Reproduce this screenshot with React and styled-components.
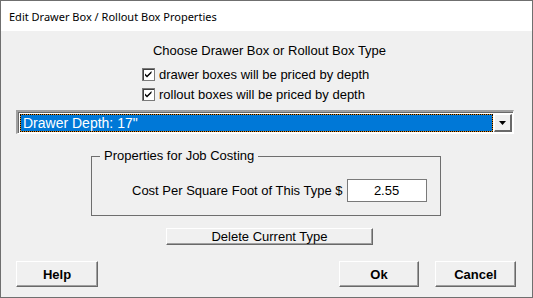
import React from "react";
import styled, { createGlobalStyle } from "styled-components";

const Global = createGlobalStyle`
  html, body { margin: 0; padding: 0; background: #ffffff; }
  * { box-sizing: border-box; }
`;

const Window = styled.div`
  width: 533px;
  height: 298px;
  border: 1px solid #6f6f6f;
  display: flex;
  flex-direction: column;
  font-family: "Liberation Sans", Arial, sans-serif;
  font-size: 13px;
  color: #000;
`;

const TitleBar = styled.div`
  height: 30px;
  flex: none;
  background: #ffffff;
  display: flex;
  align-items: center;
  padding-left: 8px;
  font-family: "Noto Sans", "Open Sans", sans-serif;
  font-size: 11px;
  color: #000;
`;

const Body = styled.div`
  flex: 1;
  background: #f0f0f0;
  display: flex;
  flex-direction: column;
  padding: 12px 16px 10px 14px;
`;

const Heading = styled.div`
  text-align: center;
  line-height: 16px;
  height: 16px;
  padding-left: 8px;
  white-space: nowrap;
`;

const CheckList = styled.div`
  margin-top: 5px;
  padding-left: 127px;
  display: flex;
  flex-direction: column;
`;

const CheckRow = styled.label`
  display: flex;
  align-items: center;
  height: 20px;
  gap: 4px;
  white-space: nowrap;
`;

const Box = styled.span`
  width: 13px;
  height: 13px;
  display: inline-flex;
  background: #fff;
  border: 1px solid #7a7a7a;
  box-shadow: inset 1px 1px 0 #404040;
`;

const Combo = styled.div`
  margin-top: 6px;
  height: 24px;
  width: 498px;
  margin-left: 1px;
  display: flex;
  border-style: solid;
  border-width: 2px 1px 1px 2px;
  border-color: #a0a0a0 #ffffff #ffffff #a0a0a0;
  box-shadow: inset 1px 1px 0 #696969;
  background: #fff;
  padding: 2px 1px 1px 2px;
`;

const FocusBg = styled.div`
  flex: 1;
  background: #d8861c;
  display: flex;
`;

const Selected = styled.div`
  flex: 1;
  border: 1px dotted #000;
  background: #0078d7;
  background-clip: padding-box;
  color: #fff;
  display: flex;
  align-items: center;
  padding-left: 2px;
  font-size: 14px;
`;

const DropBtn = styled.div`
  width: 18px;
  margin-left: 1px;
  display: flex;
  align-items: center;
  justify-content: center;
  background: #f0f0f0;
  border-style: solid;
  border-width: 1px 2px 2px 1px;
  border-color: #ffffff #696969 #696969 #ffffff;
`;

const Group = styled.div`
  position: relative;
  margin-top: 22px;
  margin-left: 76px;
  width: 350px;
  height: 60px;
  border: 1px solid #6e6e6e;
  display: flex;
  align-items: flex-start;
  padding: 22px 0 0 40px;
  gap: 4px;
`;

const Legend = styled.span`
  position: absolute;
  top: -9px;
  left: 8px;
  padding: 0 4px;
  background: #f0f0f0;
  line-height: 16px;
  white-space: nowrap;
`;

const FieldLabel = styled.span`
  line-height: 23px;
  white-space: nowrap;
`;

const Input = styled.div`
  flex: none;
  width: 80px;
  height: 23px;
  border: 1px solid #7a7a7a;
  background: #fff;
  display: flex;
  align-items: center;
  justify-content: center;
`;

const Button = styled.button`
  font-family: "Liberation Sans", Arial, sans-serif;
  font-size: 13px;
  font-weight: ${(p) => (p.$bold ? 700 : 400)};
  color: #000;
  background: #f0f0f0;
  width: ${(p) => p.$w}px;
  height: ${(p) => p.$h}px;
  padding: 0;
  border-style: solid;
  border-width: 1px;
  border-color: #ffffff #696969 #696969 #ffffff;
  box-shadow: inset -1px -1px 0 #a0a0a0;
  display: flex;
  align-items: center;
  justify-content: center;
  white-space: nowrap;
`;

const DeleteRow = styled.div`
  margin-top: 12px;
  display: flex;
  padding-left: 151px;
`;

const Footer = styled.div`
  margin-top: auto;
  display: flex;
  align-items: center;
  padding-left: 1px;
`;

const Spacer = styled.div`
  flex: 1;
`;

const Right = styled.div`
  display: flex;
  gap: 16px;
`;

const Check = () => (
  <Box>
    <svg width="11" height="11" viewBox="0 0 11 11">
      <path d="M2 4.5 L4 6.5 L8.5 2 L8.5 4 L4 8.5 L2 6.5 Z" fill="#000" />
    </svg>
  </Box>
);

export default function App() {
  return (
    <>
      <Global />
      <Window>
        <TitleBar>Edit Drawer Box / Rollout Box Properties</TitleBar>
        <Body>
          <Heading>Choose Drawer Box or Rollout Box Type</Heading>
          <CheckList>
            <CheckRow>
              <Check />
              drawer boxes will be priced by depth
            </CheckRow>
            <CheckRow>
              <Check />
              rollout boxes will be priced by depth
            </CheckRow>
          </CheckList>
          <Combo>
            <FocusBg>
              <Selected>Drawer Depth: 17"</Selected>
            </FocusBg>
            <DropBtn>
              <svg width="7" height="4" viewBox="0 0 7 4">
                <path d="M0 0 H7 L3.5 4 Z" fill="#000" />
              </svg>
            </DropBtn>
          </Combo>
          <Group>
            <Legend>Properties for Job Costing</Legend>
            <FieldLabel>Cost Per Square Foot of This Type $</FieldLabel>
            <Input>2.55</Input>
          </Group>
          <DeleteRow>
            <Button $w={207} $h={17}>Delete Current Type</Button>
          </DeleteRow>
          <Footer>
            <Button $bold $w={82} $h={26}>Help</Button>
            <Spacer />
            <Right>
              <Button $bold $w={80} $h={26}>Ok</Button>
              <Button $bold $w={81} $h={26}>Cancel</Button>
            </Right>
          </Footer>
        </Body>
      </Window>
    </>
  );
}
